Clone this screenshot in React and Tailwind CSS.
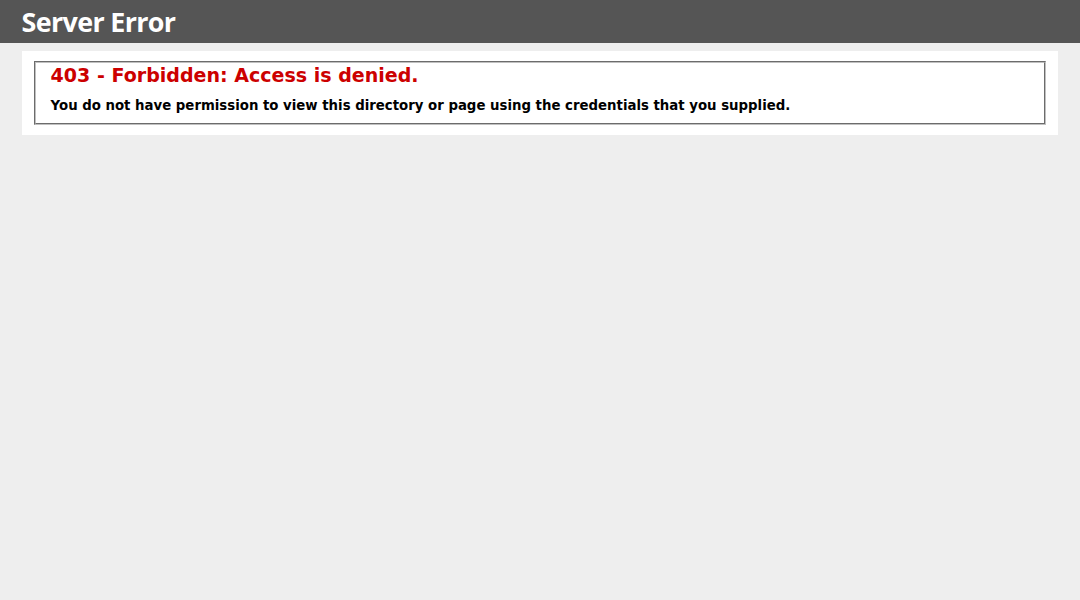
export default function App() {
  return (
    <div className="min-h-[600px] bg-[#eeeeee] text-[11.2px] font-['Verdana','DejaVu_Sans',sans-serif]">
      {/* Header */}
      <div className="w-full px-[2%] py-[6px] bg-[#555555] text-white font-['Trebuchet_MS','Open_Sans','DejaVu_Sans',sans-serif]">
        <h1 className="m-0 text-[26.88px] leading-[31px] font-bold tracking-[-0.65px]">Server Error</h1>
      </div>

      {/* Content */}
      <div className="ml-[2%] relative">
        <div className="box-content w-[96%] mt-[8px] p-[10px] bg-white relative">
          <fieldset className="mx-[2px] px-[15px] pb-[9px] pt-0 border-2 [border-style:groove] border-[#c0c0c0]">
            <h2 className="m-0 text-[19.04px] leading-[24px] font-bold text-[#cc0000]">403 - Forbidden: Access is denied.</h2>
            <h3 className="mt-[11px] text-[13.3px] leading-[16px] font-bold text-black">
              You do not have permission to view this directory or page using the credentials that you supplied.
            </h3>
          </fieldset>
        </div>
      </div>
    </div>
  );
}
